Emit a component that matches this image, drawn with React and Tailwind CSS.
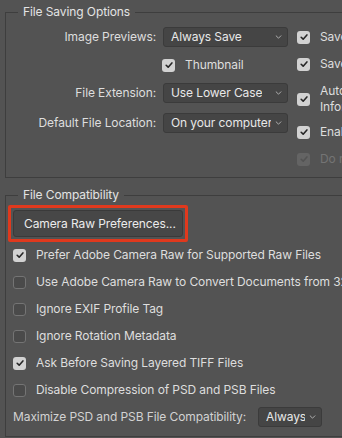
function Check({ checked, disabled }) {
  if (checked) {
    return (
      <span
        className={`flex h-[13px] w-[13px] shrink-0 items-center justify-center rounded-[3px] ${
          disabled ? 'bg-[#646464]' : 'bg-[#d2d2d2]'
        }`}
      >
        <svg viewBox="0 0 12 12" className="h-[10px] w-[10px]">
          <path
            d="M2.6 6.3 5 8.6 9.5 3.5"
            fill="none"
            stroke={disabled ? '#535353' : '#262626'}
            strokeWidth="1.9"
            strokeLinecap="round"
            strokeLinejoin="round"
          />
        </svg>
      </span>
    );
  }
  return <span className="h-[13px] w-[13px] shrink-0 rounded-[3px] border border-[#747474] bg-[#4a4a4a]" />;
}

function Select({ value, className = '' }) {
  return (
    <div
      className={`flex h-5 items-center gap-[4px] rounded-[3px] border border-[#3b3b3b] bg-[#454545] pl-[7px] pr-[5px] text-[#e8e8e8] ${className}`}
    >
      <span className="overflow-hidden whitespace-nowrap">{value}</span>
      <svg viewBox="0 0 8 5" className="ml-auto h-[4px] w-[7px] shrink-0">
        <path d="M1 1 4 4 7 1" fill="none" stroke="#c8c8c8" strokeWidth="1" strokeLinecap="round" />
      </svg>
    </div>
  );
}

function CheckRow({ label, checked, disabled, className = '' }) {
  return (
    <div className={`flex items-center gap-[10px] ${className}`}>
      <Check checked={checked} disabled={disabled} />
      <span className={`whitespace-nowrap leading-4 ${disabled ? 'text-[#747474]' : ''}`}>{label}</span>
    </div>
  );
}

export default function App() {
  return (
    <div className="h-[438px] w-[342px] overflow-hidden bg-[#535353] font-['Inter',sans-serif] text-[12px] tracking-[-0.1px] text-[#dedede]">
      <div className="pl-[5px] pt-[12px]">
        {/* File Saving Options */}
        <section className="relative h-[166px] w-[420px] border border-[#3e3e3e]">
          <span className="absolute -top-[9px] left-[12px] bg-[#535353] px-[5px] leading-4 text-[#e4e4e4]">
            File Saving Options
          </span>
          <div className="flex">
            <div className="flex flex-col">
              <div className="mt-[14px] flex items-center gap-[7px]">
                <span className="w-[150px] text-right">Image Previews:</span>
                <Select value="Always Save" className="w-[125px]" />
              </div>
              <div className="mt-2 flex h-5 items-center pl-[156px]">
                <CheckRow label="Thumbnail" checked />
              </div>
              <div className="mt-2 flex items-center gap-[7px]">
                <span className="w-[150px] text-right">File Extension:</span>
                <Select value="Use Lower Case" className="w-[125px]" />
              </div>
              <div className="mt-[10px] flex items-center gap-[7px]">
                <span className="w-[150px] whitespace-nowrap text-right">Default File Location:</span>
                <Select value="On your computer" className="w-[125px]" />
              </div>
            </div>
            <div className="ml-[9px] flex flex-col">
              <CheckRow label="Save Image Previews with Files" checked className="mt-[16px]" />
              <CheckRow label="Save As to Original Folder" checked className="mt-[11px]" />
              <div className="mt-[11px] flex items-center gap-[10px]">
                <Check checked />
                <span className="leading-4">
                  Auto-Save Recovery
                  <br />
                  Information Every:
                </span>
              </div>
              <CheckRow label="Enable Legacy Save As" checked className="mt-[9px]" />
              <CheckRow label="Do not append copy" checked disabled className="mt-[11px]" />
            </div>
          </div>
        </section>

        {/* File Compatibility */}
        <section className="relative mt-[17px] h-[242px] w-[420px] border border-[#3e3e3e]">
          <span className="absolute -top-[9px] left-[12px] bg-[#535353] px-[5px] leading-4 text-[#e4e4e4]">
            File Compatibility
          </span>
          <div className="ml-[2px] mt-[9px] h-[37px] w-[180px] rounded-[2px] border-[3px] border-[#e0391d] p-[2px]">
            <div className="flex h-full items-center whitespace-nowrap rounded-[3px] border border-[#3a3a3a] bg-[#474747] pl-[10px] text-[#ececec]">
              Camera Raw Preferences...
            </div>
          </div>
          <div className="mt-[5px] flex flex-col gap-[11px] pl-[7px]">
            <CheckRow label="Prefer Adobe Camera Raw for Supported Raw Files" checked />
            <CheckRow label="Use Adobe Camera Raw to Convert Documents from 32 bit to 16/8 bit" />
            <CheckRow label="Ignore EXIF Profile Tag" />
            <CheckRow label="Ignore Rotation Metadata" />
            <CheckRow label="Ask Before Saving Layered TIFF Files" checked />
            <CheckRow label="Disable Compression of PSD and PSB Files" />
          </div>
          <div className="mt-[9px] flex items-center gap-[12px] pl-[7px]">
            <span className="whitespace-nowrap text-[#d2d2d2]">Maximize PSD and PSB File Compatibility:</span>
            <Select value="Always" className="w-[64px]" />
          </div>
        </section>
      </div>
    </div>
  );
}
